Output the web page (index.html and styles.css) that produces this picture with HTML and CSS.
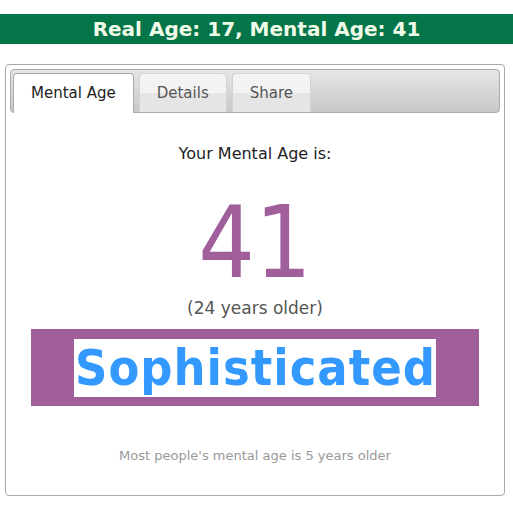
FILE: index.html
```html
<!DOCTYPE html>
<html>
<head>
<meta charset="utf-8">
<link rel="stylesheet" href="styles.css">
</head>
<body>
<div class="topbar">Real Age: 17, Mental Age: 41</div>
<div class="card">
  <div class="tabs">
    <div class="tab active">Mental Age</div>
    <div class="tab">Details</div>
    <div class="tab">Share</div>
  </div>
  <div class="panel">
    <div class="intro">Your Mental Age is:</div>
    <div class="age">41</div>
    <div class="diff">(24 years older)</div>
    <div class="badge"><span class="word">Sophisticated</span></div>
    <div class="note">Most people's mental age is 5 years older</div>
  </div>
</div>
</body>
</html>
```
FILE: styles.css
```css
body {
  margin: 0;
  font-family: "DejaVu Sans", Verdana, sans-serif;
  background: #fff;
}
.topbar {
  margin-top: 14px;
  height: 30px;
  line-height: 30px;
  background: #047548;
  color: #f0fbe8;
  font-weight: bold;
  font-size: 20px;
  text-align: center;
}
.card {
  margin: 20px 0 0 5px;
  width: 490px;
  height: 422px;
  border: 1px solid #aaaaaa;
  border-radius: 4px;
  padding: 4px;
}
.tabs {
  display: flex;
  gap: 5px;
  height: 39px;
  padding: 3px 0 0 2px;
  border: 1px solid #aaaaaa;
  border-radius: 4px;
  background: linear-gradient(#e6e6e6, #c8c8c8);
}
.tab {
  padding: 0 17px;
  line-height: 38px;
  font-size: 15px;
  color: #555;
  border: 1px solid #d3d3d3;
  border-bottom: none;
  border-radius: 4px 4px 0 0;
  background: linear-gradient(#f3f3f3 50%, #e5e5e5 50%);
}
.tab.active {
  background: #fff;
  color: #222;
  border-color: #aaaaaa;
  height: 39px;
}
.panel {
  text-align: center;
  padding: 0 21px;
}
.intro {
  margin-top: 31px;
  font-size: 16px;
  line-height: 19px;
  color: #222;
}
.age {
  margin-top: 30px;
  font-family: "DejaVu Sans Condensed", "DejaVu Sans", sans-serif;
  font-size: 99px;
  line-height: 100px;
  color: #a05e9b;
}
.diff {
  margin-top: 5px;
  font-size: 17px;
  line-height: 20px;
  color: #555;
}
.badge {
  margin-top: 11px;
  background: #a05e9b;
  height: 77px;
  padding-top: 10px;
  box-sizing: border-box;
}
.word {
  background: #fff;
  color: #3399ff;
  font-family: "DejaVu Sans Condensed", "DejaVu Sans", sans-serif;
  font-weight: bold;
  font-size: 50px;
  letter-spacing: 1px;
  padding-left: 1px;
}
.note {
  margin-top: 42px;
  font-size: 13px;
  line-height: 15px;
  color: #999;
}
```
